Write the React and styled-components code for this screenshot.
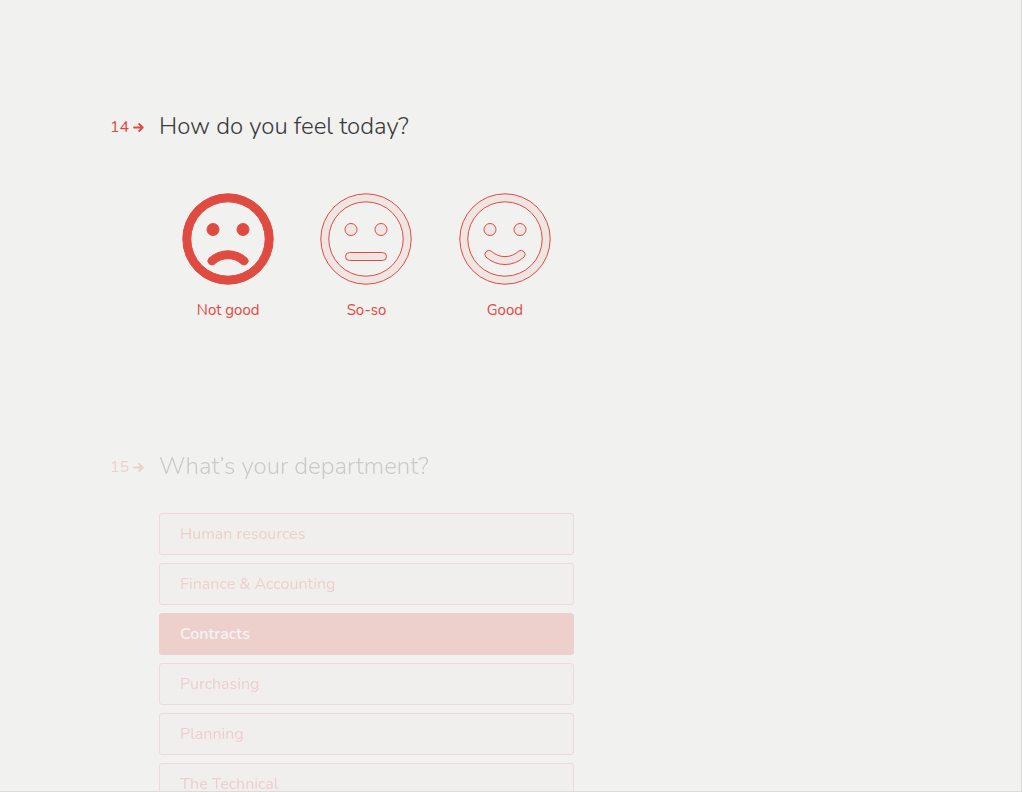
import { useState } from 'react';
import styled, { createGlobalStyle } from 'styled-components';

const departments = ['Human resources', 'Finance & Accounting', 'Contracts', 'Purchasing', 'Planning', 'The Technical'];

const moods = [
  {
    name: 'Not good',
    mouth: 'M26.9 65.3A4 4 0 0 0 32.2 71.2A20 20 0 0 1 59.8 71.2A4 4 0 0 0 65.1 65.3A28 28 0 0 0 26.9 65.3Z',
  },
  {
    name: 'So-so',
    mouth: 'M29.5 59.5H62.5A4 4 0 0 1 62.5 67.5H29.5A4 4 0 0 1 29.5 59.5Z',
  },
  {
    name: 'Good',
    mouth: 'M26.9 64A4 4 0 0 1 32.2 58.1A20 20 0 0 0 59.8 58.1A4 4 0 0 1 65.1 64A28 28 0 0 1 26.9 64Z',
  },
];

const ring =
  'M46 .8A45.2 45.2 0 1 1 46 91.2A45.2 45.2 0 1 1 46 .8ZM46 8.8A37.2 37.2 0 1 0 46 83.2A37.2 37.2 0 1 0 46 8.8Z';

function Question({ number, title, faded, children }) {
  return (
    <Section $faded={faded}>
      <Number>
        {number}
        <svg width="11" height="10" viewBox="0 0 11 10" aria-hidden="true">
          <path d="M1 5.5H9.5M6.2 2L9.7 5.5L6.2 9" />
        </svg>
      </Number>
      <Content>
        <Title id={`question-${number}`}>{title}</Title>
        {children}
      </Content>
    </Section>
  );
}

export default function App() {
  const [mood, setMood] = useState('Not good');
  const [department, setDepartment] = useState('Contracts');

  return (
    <>
      <GlobalStyle />
      <Page>
        <Question number={14} title="How do you feel today?">
          <Moods role="radiogroup" aria-labelledby="question-14">
            {moods.map(({ name, mouth }) => (
              <Mood key={name}>
                <Radio name="mood" checked={mood === name} onChange={() => setMood(name)} />
                <Face viewBox="0 0 92 92" $selected={mood === name} aria-hidden="true">
                  <path d={ring} />
                  <circle cx="31" cy="36.5" r="6" />
                  <circle cx="61" cy="36.5" r="6" />
                  <path d={mouth} />
                </Face>
                {name}
              </Mood>
            ))}
          </Moods>
        </Question>

        <Question number={15} title="What’s your department?" faded>
          <Options role="radiogroup" aria-labelledby="question-15">
            {departments.map((name) => (
              <Option key={name} $selected={department === name}>
                <Radio name="department" checked={department === name} onChange={() => setDepartment(name)} />
                {name}
              </Option>
            ))}
          </Options>
        </Question>
      </Page>
    </>
  );
}

const GlobalStyle = createGlobalStyle`
  * {
    box-sizing: border-box;
  }
  body {
    margin: 0;
    background: #f1f1ef;
    font-family: Nunito, Lato, sans-serif;
  }
`;

const Page = styled.main`
  display: flex;
  flex-direction: column;
  gap: 128px;
  height: 100vh;
  overflow: hidden;
  padding: 110px 24px 0 110px;
  border-right: 1px solid #dcdcdc;
  border-bottom: 1px solid #dcdcdc;
`;

const Section = styled.section`
  display: flex;
  gap: 15px;
  flex-shrink: 0;
  opacity: ${(props) => (props.$faded ? 0.2 : 1)};
`;

const Number = styled.div`
  display: flex;
  align-items: center;
  justify-content: space-between;
  width: 34px;
  height: 34px;
  font-size: 16px;
  color: #e04b41;
  svg {
    fill: none;
    stroke: currentColor;
    stroke-width: 1.8;
    stroke-linecap: round;
    stroke-linejoin: round;
  }
`;

const Content = styled.div`
  flex: 1;
  max-width: 415px;
`;

const Title = styled.h1`
  margin: 0 0 31px;
  font-size: 24px;
  line-height: 32px;
  font-weight: 300;
  color: #3a3a3a;
`;

const Moods = styled.div`
  display: grid;
  grid-template-columns: repeat(3, 1fr);
  padding-top: 20px;
`;

const Mood = styled.label`
  position: relative;
  display: flex;
  flex-direction: column;
  align-items: center;
  gap: 13px;
  font-size: 15px;
  line-height: 24px;
  color: #e04b41;
  cursor: pointer;
`;

const Radio = styled.input.attrs({ type: 'radio' })`
  position: absolute;
  margin: 0;
  opacity: 0;
`;

const Face = styled.svg`
  width: 92px;
  height: 92px;
  fill: #e04b41;
  fill-opacity: ${(props) => (props.$selected ? 1 : 0.06)};
  stroke: #e04b41;
  stroke-width: 1;
`;

const Options = styled.div`
  display: flex;
  flex-direction: column;
  gap: 8px;
`;

const Option = styled.label`
  position: relative;
  display: flex;
  align-items: center;
  height: 42px;
  padding: 0 20px;
  border: 1px solid ${(props) => (props.$selected ? '#e04b41' : '#ee8078')};
  border-radius: 3px;
  background: ${(props) => (props.$selected ? '#e04b41' : 'rgba(224, 75, 65, 0.05)')};
  color: ${(props) => (props.$selected ? '#fff' : '#e04b41')};
  font-size: 16px;
  font-weight: ${(props) => (props.$selected ? 600 : 400)};
  cursor: pointer;
`;
